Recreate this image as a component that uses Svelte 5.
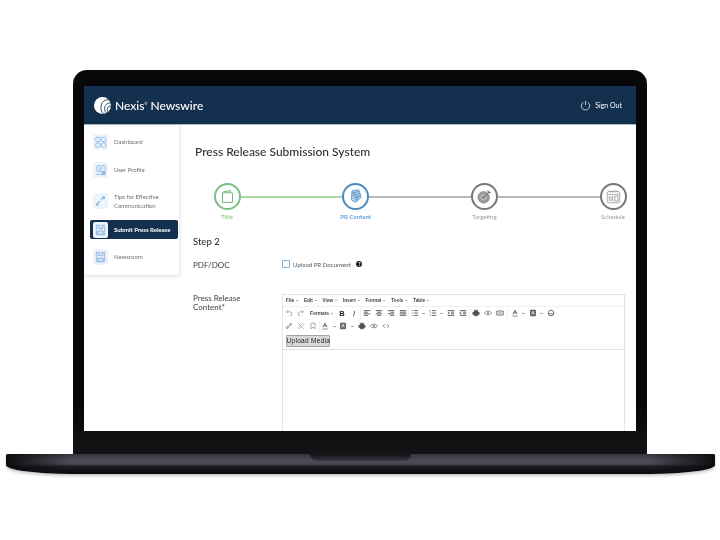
<script>
  const nav = [
    { label: 'Dashboard', kind: 'dash', cls: '' },
    { label: 'User Profile', kind: 'user', cls: '' },
    { label: 'Tips for Effective Communication', kind: 'tips', cls: 'tall' },
    { label: 'Submit Press Release', kind: 'doc', cls: 'active' },
    { label: 'Newsroom', kind: 'doc', cls: 'news' }
  ];
  const steps = [
    { label: 'Title', cls: 'green', line: 'green' },
    { label: 'PR Content', cls: 'blue', line: 'grey' },
    { label: 'Targeting', cls: 'grey', line: 'grey' },
    { label: 'Schedule', cls: 'grey', line: '' }
  ];
  const menus = ['File', 'Edit', 'View', 'Insert', 'Format', 'Tools', 'Table'];
  const row1 = ['undo','redo','formats','B','I','mid','al','ac','ar','aj','thin','ul','caret','ol','caret','in','out','mid','print','eye','media','sep','A','caret','bg','caret','emoji'];
  const row2 = ['link','unlink','mark','thin','A','caret','bg','caret','gap','print','eye','code'];
</script>

{#snippet tool(t)}
  {#if t === 'sep' || t === 'thin' || t === 'mid'}<i class="sep {t}"></i>
  {:else if t === 'gap'}<i class="spacer"></i>
  {:else if t === 'caret'}<i class="caret"></i>
  {:else if t === 'formats'}<span class="formats">Formats<i class="caret in"></i></span>
  {:else if t === 'B'}<b class="tb">B</b>
  {:else if t === 'I'}<em class="tb">I</em>
  {:else}
    <svg class="ti" viewBox="0 0 10 10" fill="none" stroke="#444" stroke-width="1">
      {#if t === 'undo'}<path d="M2 3.500h4a2.500 2.500 0 0 1 0 5M2 3.500l2-2M2 3.500l2 2" stroke="#999"/>
      {:else if t === 'redo'}<path d="M8 3.500H4a2.500 2.500 0 0 0 0 5M8 3.500l-2-2M8 3.500l-2 2" stroke="#999"/>
      {:else if t === 'al'}<path d="M1 2h8M1 4h5M1 6h8M1 8h5"/>
      {:else if t === 'ac'}<path d="M1 2h8M2.500 4h5M1 6h8M2.500 8h5"/>
      {:else if t === 'ar'}<path d="M1 2h8M4 4h5M1 6h8M4 8h5"/>
      {:else if t === 'aj'}<path d="M1 2h8M1 4h8M1 6h8M1 8h8"/>
      {:else if t === 'ul'}<path d="M3.500 2H9M3.500 5H9M3.500 8H9M1 2h1M1 5h1M1 8h1"/>
      {:else if t === 'ol'}<path d="M3.500 2H9M3.500 5H9M3.500 8H9M1 1.500v1.500M1 5h1M1 8h1"/>
      {:else if t === 'in'}<path d="M1 2h8M5 4h4M5 6h4M1 8h8M1 3.500 3 5 1 6.500"/>
      {:else if t === 'out'}<path d="M1 2h8M5 4h4M5 6h4M1 8h8M3 3.500 1 5l2 1.500"/>
      {:else if t === 'print'}<path d="M3 1.500h4V4H3zM1 4h8v3H1zM3 7h4v1.500H3z" fill="#555" stroke-width=".6"/>
      {:else if t === 'eye'}<path d="M.5 5c2.500-3 6.500-3 9 0-2.500 3-6.500 3-9 0z" stroke="#777"/><circle cx="5" cy="5" r="1.200" fill="#777" stroke="none"/>
      {:else if t === 'media'}<path d="M1 2.500h8v5H1zM3 5h4" stroke="#555"/>
      {:else if t === 'code'}<path d="M3.500 3 1.500 5l2 2M6.500 3l2 2-2 2" stroke="#555"/>
      {:else if t === 'A'}<path d="M2.500 6.500 5 1.500l2.500 5M3.500 4.800h3" stroke="#444"/><path d="M1.500 8.800h7" stroke="#777"/>
      {:else if t === 'bg'}<path d="M2 1.500h6v7H2z" fill="#777" stroke="#444"/><path d="M3.500 6.500 5 3l1.500 3.500" stroke="#fff" stroke-width=".8"/>
      {:else if t === 'emoji'}<circle cx="5" cy="5" r="3.500" stroke="#555"/><path d="M2 6h6" stroke="#555"/>
      {:else if t === 'link'}<path d="M2 8l6-6M1.500 7l2-2 1.500 1.500-2 2zM5 3.500l2-2L8.500 3l-2 2" stroke="#888"/>
      {:else if t === 'unlink'}<path d="M1.500 7l2-2 1.500 1.500-2 2zM5 3.500l2-2L8.500 3l-2 2M1.500 1.500l7 7" stroke="#aaa"/>
      {:else if t === 'mark'}<path d="M2.500 1.500h5v7L5 6.500l-2.500 2z" stroke="#999"/>
      {/if}
    </svg>
  {/if}
{/snippet}

{#snippet stepIcon(label)}
  {#if label === 'Title'}
    <svg viewBox="0 0 16 18" fill="none" stroke="#6dbb78" stroke-width="1.200"><path d="M3 3.500 11.500 2v2.500M2 4.500h11.500a.5.5 0 0 1 .5.500V16H2z"/></svg>
  {:else if label === 'PR Content'}
    <svg viewBox="0 0 18 18" fill="none" stroke="#4d8bc2" stroke-width=".9"><path d="M5 2 13 1l3 9-7 6-5-3z" fill="#b9d3ea"/><path d="M4 5l9-2M4.500 8l10-3M6 11l9-4M8 14l6-5M6 3c3 3 5 7 5 11"/></svg>
  {:else if label === 'Targeting'}
    <svg viewBox="0 0 18 18" fill="#9a9a9a" stroke="#888" stroke-width=".7"><circle cx="8" cy="10" r="7"/><circle cx="8" cy="10" r="4.300" fill="#c4c4c4"/><circle cx="8" cy="10" r="2"/><path d="M8 10 15 3M13 1.500l.5 2.500 3 .5" fill="none" stroke="#666" stroke-width="1.200"/></svg>
  {:else}
    <svg viewBox="0 0 18 18" fill="none" stroke="#a0a0a0" stroke-width="1"><rect x="1.500" y="3" width="15" height="13.500" rx="2"/><path d="M4.500 1.500v3M7.500 1.500v3M10.500 1.500v3M13.500 1.500v3M1.500 6.500h15" /><path d="M4 8.500v6M6 8.500v6M8 8.500v6M10.500 8.500h4v6h-4z" stroke-width="1.100"/></svg>
  {/if}
{/snippet}

{#snippet navIcon(kind)}
  <svg viewBox="0 0 16 16" fill="none" stroke="#8db9e2" stroke-width="1">
    {#if kind === 'dash'}<rect x="3" y="3" width="4.500" height="4.500" rx="1"/><rect x="9" y="3" width="4.500" height="4.500" rx="1"/><rect x="3" y="9" width="4.500" height="4.500" rx="1"/><rect x="9" y="9" width="4.500" height="4.500" rx="1"/>
    {:else if kind === 'user'}<rect x="4" y="3.500" width="9" height="6" rx="1"/><path d="M3 12.500h7M6 6h5M6 8h3" /><path d="M10 10h3v3h-3z" fill="#8db9e2"/>
    {:else if kind === 'tips'}<path d="M4 11.500 7.500 8M8.500 7 12 3.500M9.500 3.500H12V6M6.500 12.500H4V10" stroke-width="1.300"/>
    {:else}<path d="M3.500 3h9v10h-9z"/><path d="M5.500 3v3.500h5V3M5 9h6v4H5z" fill="#cfe1f2"/>
    {/if}
  </svg>
{/snippet}

<div class="stage">
  <div class="lid">
    <div class="screen">
      <header class="top">
        <div class="brand">
          <svg class="logo" viewBox="2 2 16 16">
            <circle cx="10" cy="10" r="8" fill="#fff"/>
            <path d="M17 4.500c-5-.5-8.500 2.500-8.500 7.500 0 2.500 1 4.500 2.500 6M18 7.500c-4 0-6 2.500-6 5.500 0 2 .5 3 1.500 4M18 10.500c-2.500 0-3.500 1.500-3.500 3.500 0 1 .2 1.500.5 2" fill="none" stroke="#14304f" stroke-width=".8"/>
          </svg>
          <span>Nexis<sup>®</sup> Newswire</span>
        </div>
        <div class="signout">
          <svg viewBox="0 0 12 12" fill="none" stroke="#fff" stroke-width=".8"><path d="M3.600 2.600a4.500 4.500 0 1 0 4.800 0M6 1v4.500"/></svg>
          Sign Out
        </div>
      </header>

      <div class="body">
        <nav class="side">
          {#each nav as n}
            <a class="item {n.cls}" href="#top">
              <span class="tile">{@render navIcon(n.kind)}</span>
              <span class="lbl">{n.label}</span>
            </a>
          {/each}
        </nav>

        <main class="main">
          <h1>Press Release Submission System</h1>

          <div class="steps">
            {#each steps as s}
              <div class="step {s.cls}">
                <span class="ring">{@render stepIcon(s.label)}</span>
                <span class="slabel">{s.label}</span>
              </div>
              {#if s.line}<span class="line {s.line}"></span>{/if}
            {/each}
          </div>

          <h2>Step 2</h2>

          <div class="form">
            <div class="flabel pdf">PDF/DOC</div>
            <div class="upload">
              <span class="check"></span>
              <span>Upload PR Document</span>
              <span class="help">?</span>
            </div>

            <div class="flabel content">Press Release<br />Content*</div>
            <div class="editor">
              <div class="menubar">
                {#each menus as m}<span>{m}<i class="caret in"></i></span>{/each}
              </div>
              <div class="toolbar t1">
                {#each row1 as t}{@render tool(t)}{/each}
              </div>
              <div class="toolbar t2">
                {#each row2 as t}{@render tool(t)}{/each}
              </div>
              <div class="toolbar t3"><button>Upload Media</button></div>
              <div class="area"></div>
            </div>
          </div>
        </main>
      </div>
    </div>
  </div>
  <div class="base"><span class="notch"></span></div>
</div>

<style>
  :global(body) { margin: 0; background: #fff; }
  .stage { width: 720px; height: 540px; padding-top: 70px; box-sizing: border-box; overflow: hidden; font-family: Lato, sans-serif; }

  .lid { width: 574px; height: 384px; margin-left: 73px; box-sizing: border-box; padding: 16px 11px 23px; background: linear-gradient(#08080a 0 88%, #141416 100%); border-radius: 14px 14px 0 0; }
  .screen { width: 552px; height: 345px; background: #fff; overflow: hidden; filter: blur(.45px); }

  .top { height: 39px; box-sizing: border-box; background: #14304f; border-bottom: 1px solid #a9bccb; display: flex; align-items: center; justify-content: space-between; padding: 0 14px 0 10px; color: #fff; }
  .brand { display: flex; align-items: center; gap: 4px; font-size: 12px; font-weight: 500; }
  .brand sup { font-size: 3.500px; vertical-align: 5px; line-height: 0; }
  .logo { width: 17px; height: 17px; }
  .signout { display: flex; align-items: center; gap: 4px; font-size: 7px; }
  .signout svg { width: 11px; height: 11px; }

  .body { display: flex; }
  .side { width: 95px; height: 150px; box-sizing: border-box; padding: 3px 0 4px; background: #fff; border-radius: 0 0 4px 4px; box-shadow: 0 1px 5px rgba(60,70,90,.22); flex: none; }
  .item { height: 28px; display: flex; align-items: center; gap: 6px; padding-left: 9px; color: #6c7076; font-size: 6px; line-height: 9px; text-decoration: none; box-sizing: border-box; }
  .tall { height: 34px; }
  .lbl { width: 68px; margin-top: -1px; }
  .tile { width: 15px; height: 16px; background: #eef4fb; border-radius: 2px; flex: none; display: flex; }
  .tile svg { width: 15px; height: 16px; }
  .active { height: 19px; margin: 2px 1px 4px 6px; padding-left: 3px; gap: 6px; background: #14304f; color: #fff; font-weight: 700; border-radius: 2px; }
  .active .lbl { white-space: nowrap; width: auto; }
  .news { margin-top: 4px; }

  .main { flex: 1; padding-left: 14px; min-width: 0; }
  h1 { margin: 19px 0 0 2px; font-size: 12px; line-height: 16px; font-weight: 500; color: #2f3338; }

  .steps { display: flex; margin: 23px 9.500px 0 20.500px; height: 42px; }
  .step { width: 27px; display: flex; flex-direction: column; align-items: center; flex: none; }
  .ring { width: 27px; height: 27px; box-sizing: border-box; border: 2px solid; border-radius: 50%; display: flex; align-items: center; justify-content: center; flex: none; }
  .ring svg { width: 15px; height: 15px; }
  .slabel { margin-top: 2px; font-size: 6px; line-height: 9px; white-space: nowrap; }
  .green .ring { border-color: #78c082; } .green .slabel { color: #93d07a; font-weight: 700; }
  .blue .ring { border-color: #4a8abf; } .blue .slabel { color: #63a2d6; font-weight: 700; }
  .grey .ring { border-color: #777; } .grey .slabel { color: #9a9a9a; }
  .line { flex: 1; height: 2px; margin-top: 12.500px; }
  .line.green { background: #a9dbab; }
  .line.grey { background: #b8b8b8; }

  h2 { margin: 11px 0 0; font-size: 9.500px; line-height: 12px; font-weight: 500; color: #333; }

  .form { display: grid; grid-template-columns: 89px 343px; margin-top: 11px; }
  .flabel { font-size: 8px; line-height: 9.500px; color: #3c3f44; }
  .pdf { margin-top: 2px; }
  .upload { display: flex; align-items: center; height: 10px; gap: 3px; font-size: 6.100px; color: #55595e; }
  .check { width: 8px; height: 8px; box-sizing: border-box; flex: none; border: 1px solid #7db3de; border-radius: 1px; }
  .help { width: 6px; height: 6px; margin-left: 2.500px; background: #222; color: #fff; border-radius: 50%; font-size: 5px; font-weight: 700; line-height: 6px; text-align: center; }
  .content { margin-top: 21px; padding-top: 2px; }

  .editor { margin-top: 23px; border: 1px solid #e3e3e3; border-bottom: 0; height: 200px; font-family: "Liberation Sans", sans-serif; }
  .menubar { height: 11px; display: flex; align-items: center; gap: 5.800px; padding-left: 3px; font-size: 4.700px; font-weight: 700; color: #444; border-bottom: 1px solid #f0f0f0; }
  .toolbar { display: flex; align-items: center; }
  .t1, .t2 { height: 13px; }
  .t3 { height: 16px; border-bottom: 1px solid #e3e3e3; padding-left: 2.500px; }
  .ti { width: 8px; height: 8px; margin: 0 2px; flex: none; }
  .tb { width: 8px; margin: 0 2px; font-size: 7.500px; font-family: "Liberation Sans", sans-serif; text-align: center; color: #222; }
  .formats { font-size: 4.800px; font-weight: 700; color: #444; margin: 0 3px; white-space: nowrap; }
  .spacer { width: 1px; flex: none; }
  .sep { width: 1px; height: 11px; background: #f0f0f0; margin: 0 1px; flex: none; }
  .thin { margin: 0 -.5px; }
  .mid { margin: 0; }
  .caret { width: 3px; height: 1px; background: #aaa; margin: 0 1.500px; flex: none; display: block; }
  .caret.in { display: inline-block; vertical-align: middle; margin: 0 0 0 2px; width: 2px; }
  button { width: 44px; height: 12px; padding: 0; border: 1px solid #a5a5a5; border-radius: 1px; background: #d9d9d9; font: 6.500px "Liberation Sans", sans-serif; letter-spacing: .3px; color: #222; white-space: nowrap; }

  .base { position: relative; width: 709px; height: 20px; margin-left: 6px; background:
      linear-gradient(90deg, #0d0d10 0, rgba(20,20,24,0) 9%, rgba(20,20,24,0) 91%, #0d0d10 100%),
      linear-gradient(#33343c 0, #4b4c58 30%, #474853 50%, #1c1c22 62%, #101014 85%, #08080a 100%);
    border-radius: 2px 2px 65px 65px / 1px 1px 9px 9px; box-shadow: 0 2px 3px rgba(0,0,0,.22); }
  .notch { position: absolute; left: 304px; top: 0; width: 101px; height: 7px; background: linear-gradient(#101014, #3a3a42); border-radius: 0 0 7px 7px; }
</style>
